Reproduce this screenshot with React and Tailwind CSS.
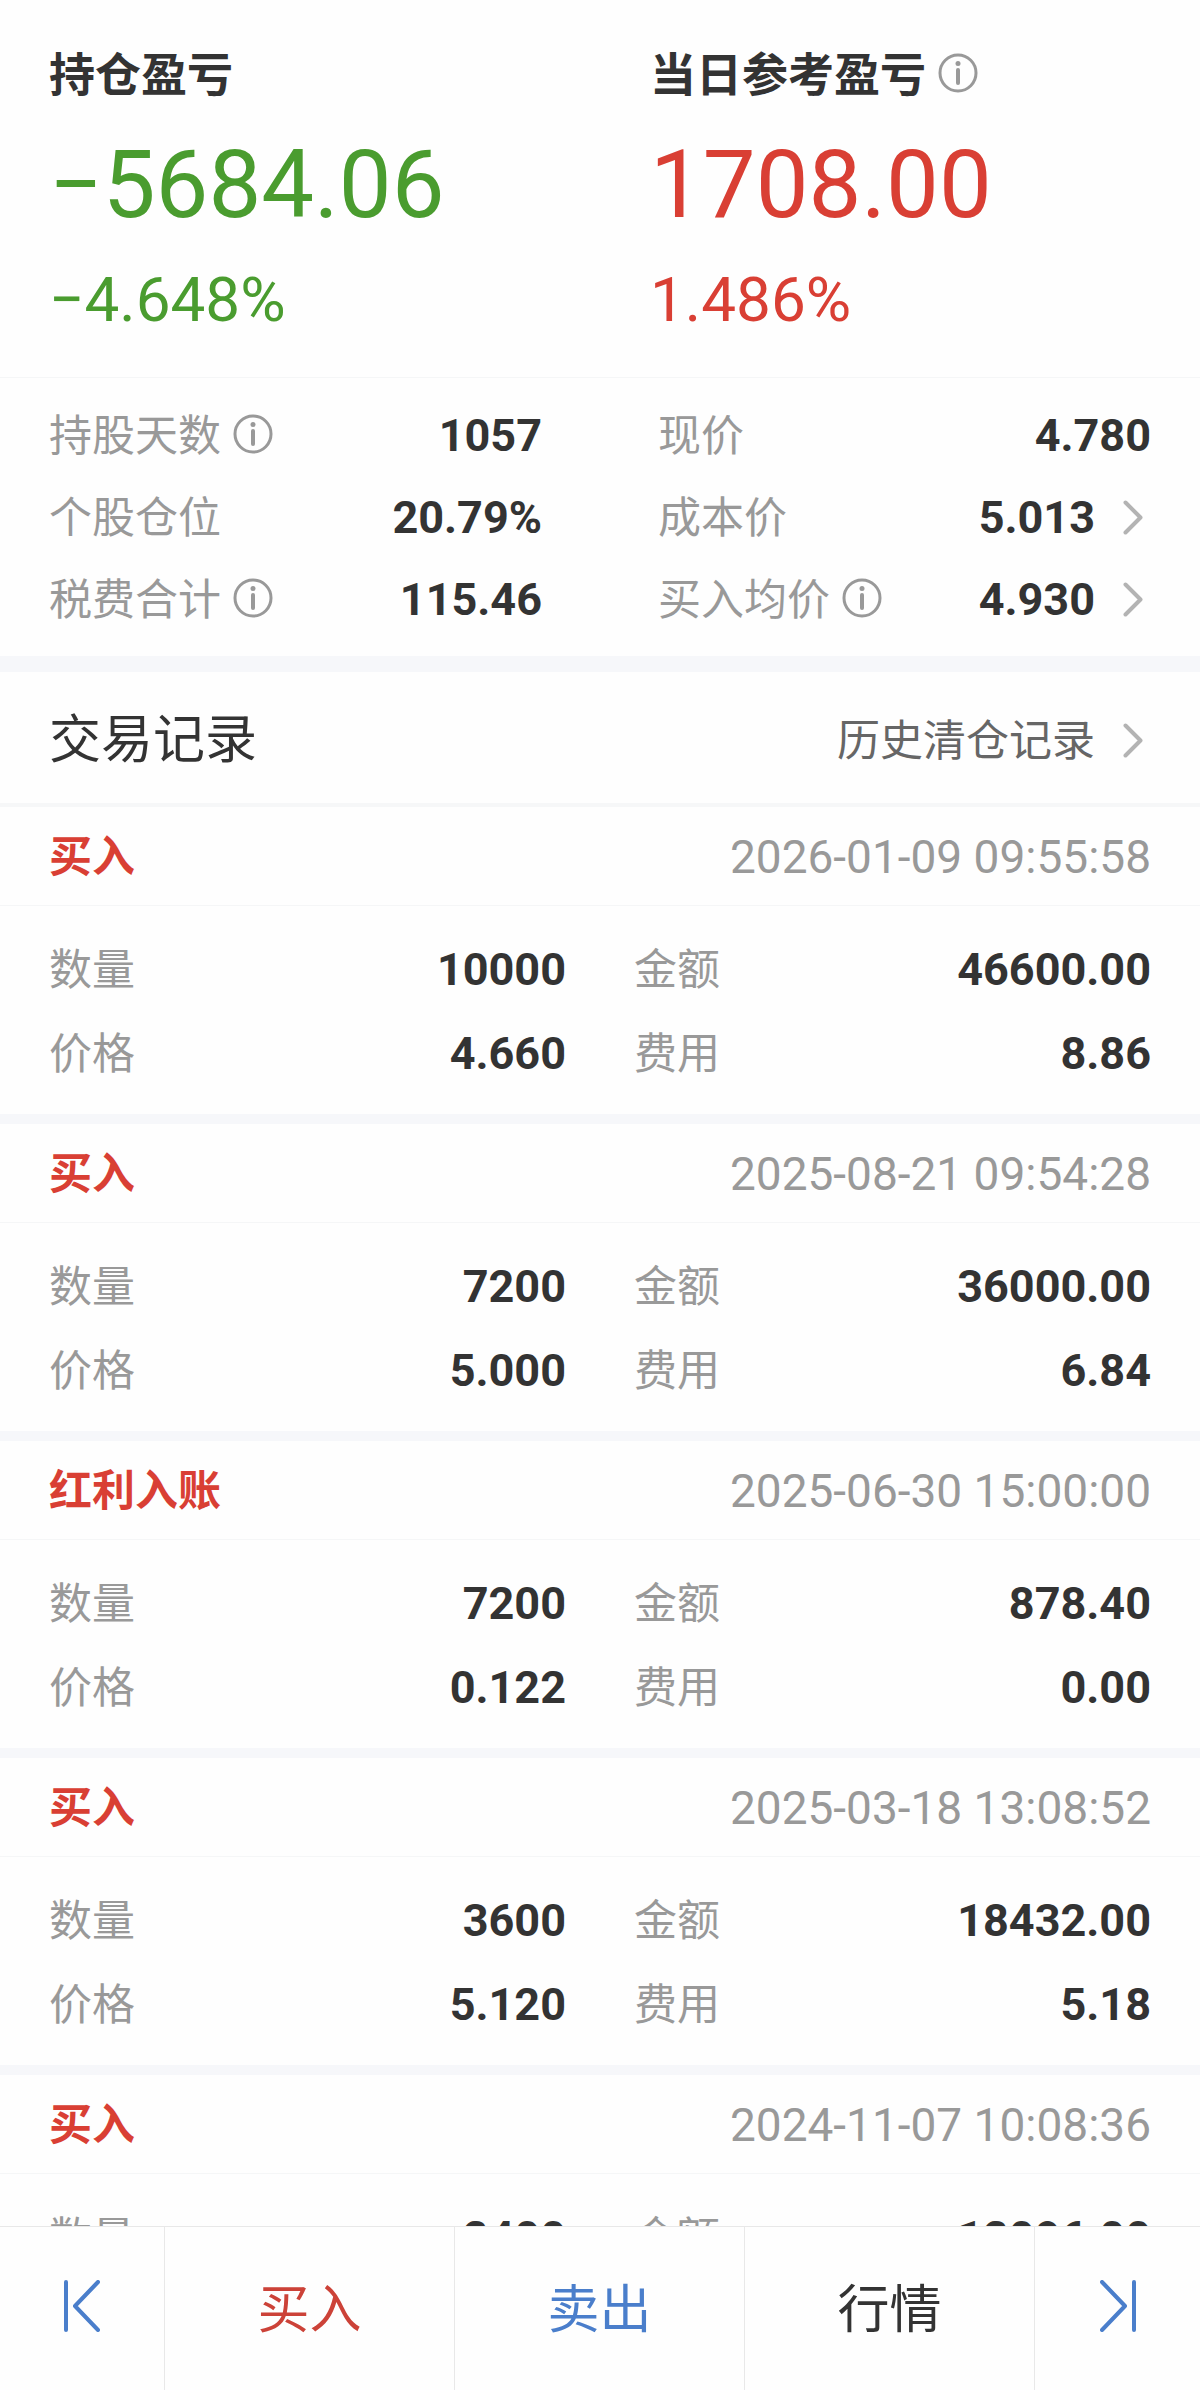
import React from 'react';

const stats = [
    { label: '持股天数', value: '1057', info: true },
    { label: '现价', value: '4.780' },
    { label: '个股仓位', value: '20.79%' },
    { label: '成本价', value: '5.013', link: true },
    { label: '税费合计', value: '115.46', info: true },
    { label: '买入均价', value: '4.930', info: true, link: true },
];

const records = [
    { type: '买入', time: '2026-01-09 09:55:58', count: '10000', amount: '46600.00', price: '4.660', fee: '8.86' },
    { type: '买入', time: '2025-08-21 09:54:28', count: '7200', amount: '36000.00', price: '5.000', fee: '6.84' },
    { type: '红利入账', time: '2025-06-30 15:00:00', count: '7200', amount: '878.40', price: '0.122', fee: '0.00' },
    { type: '买入', time: '2025-03-18 13:08:52', count: '3600', amount: '18432.00', price: '5.120', fee: '5.18' },
    { type: '买入', time: '2024-11-07 10:08:36', count: '2400', amount: '12096.00' },
];

const InfoButton = ({ label }) => (
    <button type="button" aria-label={label} className="ml-3 shrink-0 pb-1 text-[#999999]">
        <svg className="size-10" viewBox="0 0 40 40" fill="none">
            <circle cx="20" cy="20" r="18" stroke="currentColor" strokeWidth="3" />
            <circle cx="20" cy="10.5" r="2.5" fill="currentColor" />
            <path d="M20 17v13" stroke="currentColor" strokeWidth="4" strokeLinecap="round" />
        </svg>
    </button>
);

const Chevron = () => (
    <svg className="ml-7 h-9 w-5 shrink-0 text-[#b3b3b3]" viewBox="0 0 20 36" fill="none">
        <path
            d="M2.5 2.5L17.5 17.5L2.5 32.5"
            stroke="currentColor"
            strokeWidth="4"
            strokeLinecap="round"
            strokeLinejoin="round"
        />
    </svg>
);

const Profit = ({ title, value, percent, color, info }) => (
    <div>
        <div className="flex h-[60px] items-center">
            <h2 className="text-[46px] leading-[60px] font-bold">{title}</h2>
            {info && <InfoButton label={`${title}说明`} />}
        </div>
        <p className={`mt-[30px] text-[94px] leading-[100px] ${color}`}>{value}</p>
        <p className={`mt-[30px] text-[62px] leading-[70px] ${color}`}>{percent}</p>
    </div>
);

const StatRow = ({ label, value, info, link }) => (
    <div className="flex h-[82px] items-center">
        <span className="text-[43px] text-[#999999]">{label}</span>
        {info && <InfoButton label={`${label}说明`} />}
        {link ? (
            <a href="#detail" className="ml-auto flex items-center pr-2 font-bold">
                {value}
                <Chevron />
            </a>
        ) : (
            <span className="ml-auto font-bold">{value}</span>
        )}
    </div>
);

const Field = ({ label, value }) => (
    <div className="flex h-[84px] items-center justify-between">
        <span className="text-[43px] text-[#999999]">{label}</span>
        <span className="font-bold">{value}</span>
    </div>
);

const Record = ({ type, time, count, amount, price, fee }) => (
    <article className="border-b-[10px] border-[#f6f7fa] last:border-b-0">
        <div className="flex h-[99px] items-center justify-between border-b border-[#f5f6f7] px-[49px] pt-0.5">
            <h3 className="text-[43px] font-bold text-[#d93f34]">{type}</h3>
            <time className="text-[46px] text-[#999999]">{time}</time>
        </div>
        <div className="grid grid-cols-2 gap-x-[68px] px-[49px] pt-[22px] pb-[18px]">
            <Field label="数量" value={count} />
            <Field label="金额" value={amount} />
            {price && <Field label="价格" value={price} />}
            {fee && <Field label="费用" value={fee} />}
        </div>
    </article>
);

const App = () => {
    return (
        <div className="min-h-screen bg-[#fefefe] font-['Roboto','Noto_Sans_CJK_SC',sans-serif] text-[45px] leading-[60px] text-[#333333]">
            {/* Profit and loss */}
            <section className="grid grid-cols-2 gap-x-[100px] border-b border-[#f5f6f7] px-[49px] pt-[45px] pb-[42px]">
                <Profit title="持仓盈亏" value="−5684.06" percent="−4.648%" color="text-[#4a9c2f]" />
                <Profit title="当日参考盈亏" value="1708.00" percent="1.486%" color="text-[#d93f34]" info />
            </section>

            {/* Holding details */}
            <section className="grid grid-cols-2 gap-x-[116px] border-b-16 border-[#f6f7fa] px-[49px] pt-[17px] pb-[15px]">
                {stats.map((item) => (
                    <StatRow key={item.label} {...item} />
                ))}
            </section>

            {/* Trade history */}
            <div className="flex h-[135px] items-center justify-between border-b-4 border-[#f6f7f8] px-[49px] pt-[7px]">
                <h2 className="text-[52px]">交易记录</h2>
                <a href="#history" className="flex items-center pr-2 text-[43px] text-[#666666]">
                    历史清仓记录
                    <Chevron />
                </a>
            </div>
            <main>
                {records.map((record) => (
                    <Record key={record.time} {...record} />
                ))}
            </main>

            {/* Bottom bar */}
            <nav className="fixed inset-x-0 bottom-0 flex h-[164px] divide-x divide-[#e8e8e8] border-t border-[#e8e8e8] bg-[#fefefe] text-[52px]">
                <button type="button" aria-label="上一个" className="flex w-[165px] items-center justify-center pb-1.5 text-[#4a7ecb]">
                    <svg className="h-[52px] w-9" viewBox="0 0 36 52" fill="none" stroke="currentColor" strokeWidth="4" strokeLinecap="round" strokeLinejoin="round">
                        <path d="M2 2v48M34 2L11 26L34 50" />
                    </svg>
                </button>
                <button type="button" className="flex-1 pt-1 text-[#cc4238]">买入</button>
                <button type="button" className="flex-1 pt-1 text-[#4a7ecb]">卖出</button>
                <button type="button" className="flex-1 pt-1">行情</button>
                <button type="button" aria-label="下一个" className="flex w-[165px] items-center justify-center pb-1.5 text-[#4a7ecb]">
                    <svg className="h-[52px] w-9" viewBox="0 0 36 52" fill="none" stroke="currentColor" strokeWidth="4" strokeLinecap="round" strokeLinejoin="round">
                        <path d="M34 2v48M2 2L25 26L2 50" />
                    </svg>
                </button>
            </nav>
        </div>
    );
};

export default App;
